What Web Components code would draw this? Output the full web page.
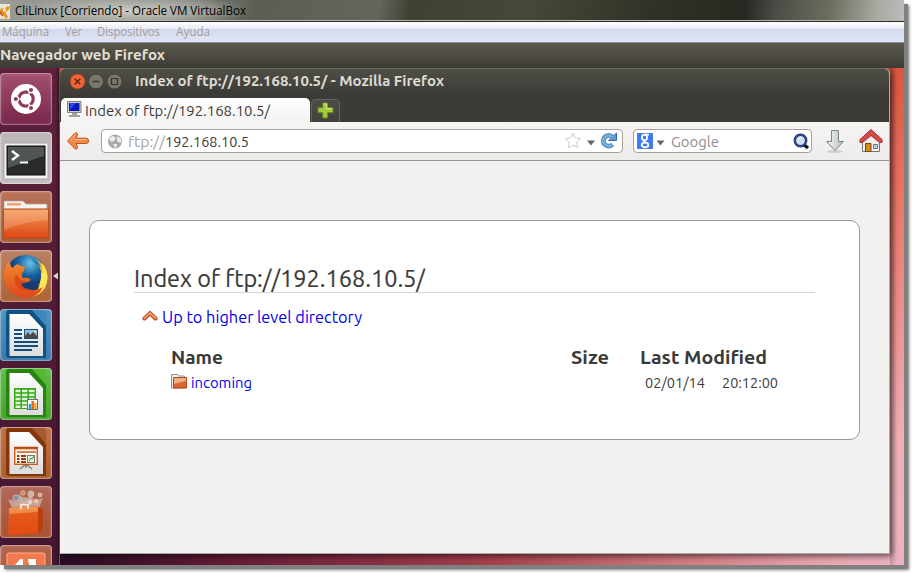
<!DOCTYPE html>
<html lang="es"><head><meta charset="utf-8"><title>CliLinux</title>
<style>
html,body{margin:0;width:912px;height:573px;overflow:hidden;background:#fff;font-family:Ubuntu,"Noto Sans","Open Sans",sans-serif}
</style></head><body>
<vm-frame></vm-frame>
<script>
const define=(name,html,after)=>{
  const t=document.createElement('template');t.innerHTML=html;
  customElements.define(name,class extends HTMLElement{
    connectedCallback(){
      if(this.shadowRoot)return;
      this.attachShadow({mode:'open'}).append(t.content.cloneNode(true));
      if(after)after.call(this,this.shadowRoot);
    }
  });
};

/* Text condensed or widened to the width given in "w". */
define('fit-text',`<style>
:host{display:block;flex:none;white-space:pre;line-height:20px;height:20px}
span{display:inline-block;transform-origin:0 50%}
</style><span><slot></slot></span>`,function(r){
  const w=+this.getAttribute('w'),s=r.querySelector('span');
  this.style.width=w+'px';this.style.fontSize=this.getAttribute('size')+'px';
  const n=s.getBoundingClientRect().width;
  if(n)s.style.transform='scaleX('+w/n+')';
});

const ICONS={
ubuntu:`<circle cx="26" cy="26" r="15" fill="#fff"/><circle cx="26" cy="26" r="7.2" fill="none" stroke="#8d3b5a" stroke-width="3.2"/><path d="M26 26L14 26M26 26L32 15.6M26 26L32 36.4" stroke="#fff" stroke-width="1.2"/><g fill="#8d3b5a" stroke="#fff" stroke-width="1.3"><circle cx="15.800" cy="26" r="2.700"/><circle cx="31" cy="17" r="2.700"/><circle cx="31" cy="35" r="2.700"/></g>`,
terminal:`<rect x="4" y="11" width="44" height="36" rx="1.5" fill="#f4f4f4" stroke="#a5a5a5"/><rect x="7" y="14" width="38" height="29" fill="#292b2b" stroke="#111"/><path d="M8 15H44V24L8 36Z" fill="#696c6b" opacity=".65"/><path d="M12 19l6 4.5-6 4.5" fill="none" stroke="#fff" stroke-width="2.3"/><path d="M20 30.5h8" stroke="#fff" stroke-width="2"/>`,
folder:`<path d="M4 19V10H23L26 13H47V19Z" fill="#f5f3f0" stroke="#aaa098" stroke-width=".7"/><path d="M7 12H21V14.5H7Z" fill="#f5a173"/><rect x="3.5" y="18" width="45" height="29" rx="1" fill="url(#of)" stroke="#b84a1d"/><path d="M4 19H48V29Q26 30 4 39Z" fill="#fff" opacity=".18"/>`,
firefox:`<circle cx="26" cy="26" r="21" fill="url(#bl)"/><path d="M30 7Q47 12 47.500 27Q47 44 29 47.500Q40 41 41 28Q42 20 38 14Q36 9 30 7Z" fill="#f5b324"/><path d="M30 7Q38 9 41 17L35 13Z" fill="#2a7db5"/><path d="M42 13Q49 21 47 32Q45 42 35 46Q39 40 41 33L38 37Q42 30 41 22L43 24Z" fill="#ffe75a"/><path d="M7 13Q2 24 5 33Q10 46 25 48Q38 48 43 37Q35 42 27 39Q21 37 21 33Q26 34 31 30Q29 27 23 28Q20 25 24 21L25 16Q20 17 18 14Q14 15 13 18Q10 17 10 11Z" fill="url(#ff)"/><path d="M15 26Q18 24 19 28Q20 31 27 31Q24 34 21 33Q23 40 32 40Q24 43 18 37Q13 33 15 26Z" fill="#d53e16" opacity=".65"/>`,
writer:`<path d="M9 1H33L46 15V49H9Q6 49 6 46V4Q6 1 9 1Z" fill="#0f5384"/><path d="M32 1H43Q46 1 46 5V17Z" fill="#3f88b9"/><path d="M9.500 5H29L43 20V47H9.500Z" fill="url(#pg)"/><path d="M29 5L43 20H39Q33 13 29 5Z" fill="#fff"/><path d="M14 21H22M14 25H22M14 29H22M14 33H38M14 37H38M14 41H32" stroke="#124e7e" stroke-width="2"/><rect x="24.500" y="20.500" width="13" height="9" fill="#8dc0e8" stroke="#124e7e"/><path d="M25 29V27L28 23L30 26L33 23L37 27V29Z" fill="#4c4844"/><circle cx="35" cy="22.500" r="1" fill="#ffe84e"/>`,
calc:`<path d="M9 1H33L46 15V49H9Q6 49 6 46V4Q6 1 9 1Z" fill="#278410"/><path d="M32 1H43Q46 1 46 5V17Z" fill="#55b932"/><path d="M9.500 5H29L43 20V47H9.500Z" fill="url(#pg)"/><rect x="14" y="20" width="22" height="21" fill="#35a915"/><path d="M15.500 23H20.500M22 23H27.500M29 23H34.500M15.500 27H20.500M22 27H27.500M29 27H34.500M15.500 31H20.500M22 31H27.500M29 31H34.500M15.500 35H20.500M22 35H27.500M15.500 38.700H20.500M22 38.700H27.500" stroke="#e6f6dc" stroke-width="2.4"/><rect x="27.500" y="31.500" width="10" height="10" fill="#fff" stroke="#68717a"/><path d="M30 41V36" stroke="#1e9ed8" stroke-width="2.500"/><path d="M32.700 41V33" stroke="#e86719" stroke-width="2.500"/><path d="M35.400 41V35" stroke="#f3a51c" stroke-width="2.300"/>`,
impress:`<path d="M9 1H33L46 15V49H9Q6 49 6 46V4Q6 1 9 1Z" fill="#843608"/><path d="M32 1H43Q46 1 46 5V17Z" fill="#a55b30"/><path d="M9.500 5H29L43 20V47H9.500Z" fill="url(#pg)"/><path d="M26 37V41M26 37L20 42M26 37L32 42" stroke="#7b7b78" stroke-width="1.500"/><rect x="14.700" y="21.700" width="22.600" height="15.600" fill="#fff8ec" stroke="#cf5b1b" stroke-width="1.400"/><path d="M14 20.500H38" stroke="#b34915" stroke-width="1.500"/><path d="M17 25H36" stroke="#bd602b" stroke-width="1.400"/><path d="M17 29H19.500M17 32H19.500M17 35H19.500M21 29H26M21 32H26M21 35H26" stroke="#8e3e16" stroke-width="1.800"/><rect x="27.500" y="28.500" width="7" height="7" fill="#e8f4dc" stroke="#777"/><path d="M29 34l2-3 1 1 2-3" stroke="#2a9632" fill="none"/>`,
shop:`<path d="M12 22L8 13L17 16L19 8L25 14L31 8L34 15L43 12L39 22Z" fill="#fff" opacity=".4"/><g fill="#c9b5a8" stroke="#e8cfc2" stroke-width=".6"><circle cx="16" cy="12" r="3.200" fill="#8494a4"/><circle cx="31" cy="8" r="3"/><circle cx="40" cy="9" r="2"/><circle cx="23" cy="7" r="2.200" fill="#d08a74"/><circle cx="36" cy="15" r="2" fill="#e7cf93"/><circle cx="24" cy="14" r="2.500" fill="#a3a9a6"/><circle cx="30" cy="16" r="2" fill="#d9d9d9"/></g><path d="M9 22L36 20.500L43 23V44L38 47L9 49Z" fill="#b93f10"/><path d="M9 22L38 20.500V47L8.500 49Z" fill="url(#of)"/><path d="M9 28L38 26V47L8.500 49Z" fill="#e24e13" opacity=".8"/><path d="M21 23V18.500H28V22.500" fill="none" stroke="#fff1db" stroke-width="1.700"/>`,
one:`<rect x="7" y="8" width="38" height="38" rx="2" fill="#f2794e" stroke="#ffb18a"/><path d="M15 20L20 14H23V22H15ZM28 14H36V22H31Q28 19 28 14Z" fill="#fff"/>`};
define('launcher-tile',`<style>
:host{display:block;flex:none;width:52px;height:52px;border-radius:4px;overflow:hidden;box-sizing:border-box;
background:linear-gradient(var(--a),var(--b));box-shadow:inset 0 0 0 1px #ffffff44,inset 0 0 4px #ffffff44}
svg{display:block;width:52px;height:52px}</style><svg viewBox="0 0 52 52"></svg>`,function(r){
  this.style.setProperty('--a',this.getAttribute('a'));this.style.setProperty('--b',this.getAttribute('b'));
  r.querySelector('svg').innerHTML=`<defs><linearGradient id="of" x2="0" y2="1"><stop stop-color="#f39a55"/><stop offset="1" stop-color="#de4614"/></linearGradient><linearGradient id="ff" x2="0" y2="1"><stop stop-color="#f08a2a"/><stop offset="1" stop-color="#e0461c"/></linearGradient><radialGradient id="bl" cx=".6" cy=".2"><stop stop-color="#69c3e8"/><stop offset=".6" stop-color="#17609c"/><stop offset="1" stop-color="#173a70"/></radialGradient><linearGradient id="pg" x2="0" y2="1"><stop stop-color="#fff"/><stop offset="1" stop-color="#dcdcdc"/></linearGradient></defs>`+ICONS[this.getAttribute('icon')];
});

define('unity-launcher',`<style>
:host{display:flex;flex:none;width:60px;box-sizing:border-box;padding-top:5px;flex-direction:column;gap:7px;overflow:hidden;
background:linear-gradient(90deg,#0000 56px,#24081688 59px,#6b5b62 59px),linear-gradient(#5e203a,#521c36 45%,#431633)}
.run{display:flex;align-items:center}
.run svg{display:block;margin-left:1px}
</style>
<launcher-tile icon="ubuntu" a="#a45070" b="#77254a"></launcher-tile>
<launcher-tile icon="terminal" a="#bcb5b8" b="#c4bdc1"></launcher-tile>
<launcher-tile icon="folder" a="#b8735a" b="#a55b35"></launcher-tile>
<div class="run"><launcher-tile icon="firefox" a="#b98163" b="#ad6236"></launcher-tile><svg width="6" height="8"><path d="M0 4L5 .5V7.500Z" fill="#ddd"/></svg></div>
<launcher-tile icon="writer" a="#4f94bd" b="#3978ad"></launcher-tile>
<launcher-tile icon="calc" a="#62bd4b" b="#43a32a"></launcher-tile>
<launcher-tile icon="impress" a="#bd7048" b="#a85e2f"></launcher-tile>
<launcher-tile icon="shop" a="#b0685a" b="#a9512e"></launcher-tile>
<launcher-tile icon="one" a="#b1644f" b="#a9512e"></launcher-tile>`);

define('host-bars',`<style>
:host{display:block;flex:none}
.t{display:flex;height:20px;background:
radial-gradient(ellipse 120px 16px at 130px 11px,#d4d4d0dd,#b8b8b299 60%,#0000),
linear-gradient(100deg,#9a9a96 0,#85867f 180px,#5a5e54 255px,#62665b 375px,#3f4233 405px,#464937 520px,#2f3127 650px,#272821 735px,#4a4c46 765px,#6c705f 820px,#a6aaa0 865px,#c2c5c2 904px);
border-bottom:1px solid #b2b1ab;font-family:"Segoe UI","Open Sans",sans-serif;color:#000}
.t svg{flex:none;margin:4px 5px 0 0}
.t fit-text{margin-top:1px}
.m{display:flex;height:20px;margin:0;border-top:1px solid #2b2b2b;border-bottom:1px solid #8d95a5;padding-left:2px;font-family:"Segoe UI","Open Sans",sans-serif;color:#9d9d9d;
background:linear-gradient(#fff,#e7eaf3 7px,#d3d9ec 7px,#dfe5f4)}
.u{height:25px;background:linear-gradient(#5b594d,#3d3b36);color:#e2dfd5;font-weight:bold;box-sizing:border-box;padding-top:2px}
</style>
<div class="t"><svg width="10" height="15"><rect width="10" height="15" fill="#e9e3d8"/><path d="M0 6Q1 3 4 5L8 2L10 3Q9 7 5 8L8 13L6 15L2 9L0 11Z" fill="#e9951c"/><circle cx="4.500" cy="6" r="1.500" fill="#fff"/><path d="M0 8L3 12" stroke="#b95a16" stroke-width="1.500"/></svg><fit-text w="231" size="12">CliLinux [Corriendo] - Oracle VM VirtualBox</fit-text></div>
<div class="m"><fit-text w="47" size="12">Máquina</fit-text><fit-text w="17" size="12" style="margin-left:16px">Ver</fit-text><fit-text w="63" size="12" style="margin-left:15px">Dispositivos</fit-text><fit-text w="34" size="12" style="margin-left:16px">Ayuda</fit-text></div>
<div class="u"><fit-text w="165" size="14.700">Navegador web Firefox</fit-text></div>`);

define('firefox-chrome',`<style>
:host{display:block;flex:none;color:#3c3b37}
.dark{height:54px;background:linear-gradient(#504f47,#3c3b37 26px);border-radius:6px 6px 0 0;box-shadow:inset 0 1px #6a695d}
.title{display:flex;height:30px;padding:0 0 0 10px;color:#dfdbd2;font-weight:bold}
.btns{display:flex;gap:2px;margin:5px 13px 0 -1px}
.btns svg{flex:none}
.title fit-text{margin:3px 0 0 -1px}
.tabs{display:flex;height:24px;gap:1px;align-items:flex-end;padding-left:1px}
.tab{display:flex;width:249px;height:24px;box-sizing:border-box;border-radius:5px 5px 0 0;background:linear-gradient(#fff,#f4f3f2)}
.tab svg{margin:3px 3px 0 6px}.tab fit-text{margin-top:3px}
.add{width:29px;height:23px;border:1px solid #65645c;border-bottom:0;border-radius:5px 5px 0 0;background:linear-gradient(#4c4b45,#42413c);box-sizing:border-box}
.add svg{display:block;margin:2px 0 0 5px}
.nav{display:flex;height:38px;background:linear-gradient(#f6f5f4,#edecea);border-bottom:1px solid #999795}
.back{margin:9px 0 0 6px;width:35px}
.box{display:flex;height:24px;box-sizing:border-box;margin-top:7px;border:1px solid #a5a29e;border-radius:4px;background:#fff}
.box svg,.box fit-text{flex:none}
.url{width:522px}.search{width:179px;margin-left:10px}
</style>
<div class="dark"><div class="title"><div class="btns">
<svg width="17" height="18"><circle cx="8.500" cy="8.500" r="7.500" fill="#ee6337" stroke="#9c401f"/><path d="M5.700 5.700l5.600 5.600m0-5.600l-5.600 5.600" stroke="#5c2313" stroke-width="1.500"/></svg>
<svg width="16" height="18"><circle cx="8" cy="8.500" r="7.500" fill="#77756c" stroke="#33322e" stroke-width=".7"/><path d="M4.500 8.500h7" stroke="#33322e" stroke-width="1.300"/></svg>
<svg width="17" height="18"><circle cx="8.500" cy="8.500" r="7.500" fill="#77756c" stroke="#33322e" stroke-width=".7"/><path d="M5.500 5.500h6v6h-6z" fill="none" stroke="#33322e" stroke-width="1.200"/></svg>
</div><fit-text w="309" size="14.700">Index of ftp://192.168.10.5/ - Mozilla Firefox</fit-text></div>
<div class="tabs"><div class="tab"><svg width="15" height="17"><path d="M.5.500h13.500v11H.5z" fill="#c9c9c6" stroke="#84847f"/><path d="M2 2h10.500v8H2z" fill="#0c18b8"/><path d="M3 2h6L3 9z" fill="#2647f5"/><path d="M5 12h5v2H5zM2 14h11v2H2z" fill="#a2a29d"/></svg><fit-text w="185" size="15">Index of ftp://192.168.10.5/</fit-text></div>
<div class="add"><svg width="17" height="17"><path d="M5.700 1h5v4.700H16v5h-5.300V16h-5v-5.300H1v-5h4.700z" fill="#a3ca38" stroke="#61872a"/><path d="M6.700 2h3v4.700H15" fill="none" stroke="#d7ec92"/></svg></div></div></div>
<div class="nav"><div class="back"><svg width="24" height="20"><path d="M1.500 10L9 2.200Q11.500 1 11.500 4L10 7.200H20.500Q22.500 7.500 22.500 10T20.500 12.500H10L11.500 15.500Q11.500 19 9 17.800Z" fill="#f18b4b" stroke="#c4501c"/><path d="M3.500 9.500L9.500 3.500M8.500 8.500H20" stroke="#f9bf86"/></svg></div>
<div class="box url"><svg width="26" height="22"><circle cx="13" cy="11.500" r="7" fill="#a9a9a9"/><path d="M7 9q2-3 4-3l3 2-2 3-3 1zM15 6l4 3v4l-3-1-1-2zM11 14l4 0 0 2-2 2z" fill="#ededed"/></svg><fit-text w="37" size="15" style="color:#a6a6a6;margin-top:2px">ftp://</fit-text><fit-text w="84" size="15" style="margin-top:2px">192.168.10.5</fit-text>
<svg width="18" height="22" style="margin-left:316px"><path d="M8 3l2.300 5 5.200.6-3.800 3.700 1 5.500L8 15.200l-4.700 2.600 1-5.500L.5 8.600 5.700 8z" fill="#fff" stroke="#ccc"/></svg><svg width="16" height="22"><path d="M4 10.500h8l-4 5z" fill="#666"/></svg>
<svg width="20" height="22" style="margin-left:1px"><path d="M12.500 14.500A5.300 5.300 0 1 1 12.800 7.500" fill="none" stroke="#3470ad" stroke-width="4.600"/><path d="M8.500 10.500H16.500V3z" fill="#5d9bd0" stroke="#3470ad"/><path d="M12.500 14.500A5.300 5.300 0 1 1 12.800 7.500" fill="none" stroke="#74b0dd" stroke-width="3.200"/></svg></div>
<div class="box search"><svg width="37" height="22"><rect x="3" y="3" width="16" height="16" rx="1" fill="#4179f2"/><g fill="none" stroke="#fff" stroke-width="1.800"><ellipse cx="10.500" cy="7.600" rx="2.600" ry="2.900"/><path d="M11 4.600h4M12 10.300q-3 1-1 2.300"/><ellipse cx="11" cy="15" rx="3.300" ry="2.300"/></g><path d="M22.500 10.500h8l-4 5z" fill="#666"/></svg><fit-text w="48" size="15" style="color:#8d8d8d;margin-top:2px">Google</fit-text>
<svg width="20" height="22" style="margin-left:73px"><path d="M11 14l5 4" stroke="#111" stroke-width="3.500"/><circle cx="8.500" cy="10.500" r="5.700" fill="#cfe0f3" stroke="#182763" stroke-width="2.400"/><circle cx="8.500" cy="10.500" r="5.700" fill="none" stroke="#5769b4" stroke-width=".8"/><path d="M6 10q1-3 4-2" stroke="#fff" fill="none"/></svg></div>
<svg width="20" height="26" style="margin:6px 0 0 13px"><defs><linearGradient id="d" x2="1"><stop stop-color="#f7f8f7"/><stop offset="1" stop-color="#b4bdbc"/></linearGradient></defs><ellipse cx="10" cy="23.500" rx="8" ry="1.500" fill="#ccc"/><path d="M6.500 2.500h7v11h5L10 22.500 1.500 13.500h5z" fill="url(#d)" stroke="#7c8585"/></svg>
<svg width="24" height="26" style="margin:6px 0 0 14px"><path d="M3.500 11L12 5l8.500 6v12.500h-17z" fill="#f1efeb" stroke="#777"/><path d="M6.500 15.500h5.500v8H6.500z" fill="#d38c16" stroke="#754c0e"/><path d="M14.500 16.500h4v4h-4z" fill="#b8d2e8" stroke="#60788a"/><path d="M1 11.500L12 1.500l11 10v3h-2.500L12 7.500l-8.500 7H1z" fill="#d54949" stroke="#a83030"/></svg></div>`);

define('ftp-listing',`<style>
:host{display:block;box-sizing:border-box;width:771px;height:220px;margin:59px 0 0 29px;border:1px solid #999;border-radius:10px;background:#fff;color:#3a3a38;padding:44px 44px 0 44px}
.h{height:27px;border-bottom:1px solid #d5d5d5;-webkit-text-stroke:.2px}
.up{display:flex;margin:14px 0 0 8px}
.up svg{margin:2px 4px 0 0}
.grid{display:grid;grid-template-columns:400px 69px auto;margin:22px 0 0 37px}
.grid fit-text.b{font-weight:bold;margin-top:-1px}
.f,.d{display:flex;margin-top:5px}.f svg{margin:1px 4px 0 0}
.d{padding-left:5px;gap:17px}
a{color:#0000ee;text-decoration:none}
</style>
<div class="h"><fit-text w="291" size="24" style="padding-top:4px">Index of ftp://192.168.10.5/</fit-text></div>
<div class="up"><svg width="16" height="12"><path d="M2.500 9.500L8 4.200l5.500 5.300" fill="none" stroke="#c14a1c" stroke-width="4" stroke-linecap="round"/><path d="M2.500 9.200L8 4l5.500 5.200" fill="none" stroke="#ef9b68" stroke-width="1.900" stroke-linecap="round"/></svg><a><fit-text w="200" size="16.200">Up to higher level directory</fit-text></a></div>
<div class="grid"><fit-text class="b" w="52" size="17.500">Name</fit-text><fit-text class="b" w="38" size="17.500">Size</fit-text><fit-text class="b" w="127" size="17.500">Last Modified</fit-text>
<div class="f"><svg width="16" height="16"><path d="M.5 14V.5h6l1 1.500h6V14z" fill="#f4f2ee" stroke="#969188"/><path d="M2.500 3.500h13v10.500h-13z" fill="#dd6330" stroke="#b3441b"/><path d="M3 4h12v3L3 10z" fill="#eeae84"/></svg><a><fit-text w="61" size="14.500">incoming</fit-text></a></div><div></div>
<div class="d"><fit-text w="60" size="14.200">02/01/14</fit-text><fit-text w="56" size="14.200">20:12:00</fit-text></div></div>`);

define('vm-frame',`<style>
:host{display:flex;flex-direction:column;width:904px;height:565px;overflow:visible;box-shadow:4px 4px 0 #808080,5px 5px 3px #777}
.desk{display:flex;height:497px;overflow:hidden;background:linear-gradient(90deg,#0000 890px,#0003 890px,#0000 897px),linear-gradient(#d95740,#e9705e 22%,#ee9190 50%,#f0b0b5 75%,#ebb4c3)}
.side{flex:none;width:844px;background:linear-gradient(90deg,#280c24,#641c36 20%,#a33f4c 50%,#d58087 76%,#e9a9b2 92%,#0000) 0 485px/100% 12px no-repeat}
.win{width:829px;height:485px;background:#f2f1f0;border-right:1px solid #b5aaa7;border-bottom:1px solid #aaa;border-radius:6px 6px 0 0;box-shadow:2px 2px 6px #0009}
</style><host-bars></host-bars><div class="desk"><unity-launcher></unity-launcher><div class="side"><div class="win"><firefox-chrome></firefox-chrome><ftp-listing></ftp-listing></div></div></div>`);
</script></body></html>
